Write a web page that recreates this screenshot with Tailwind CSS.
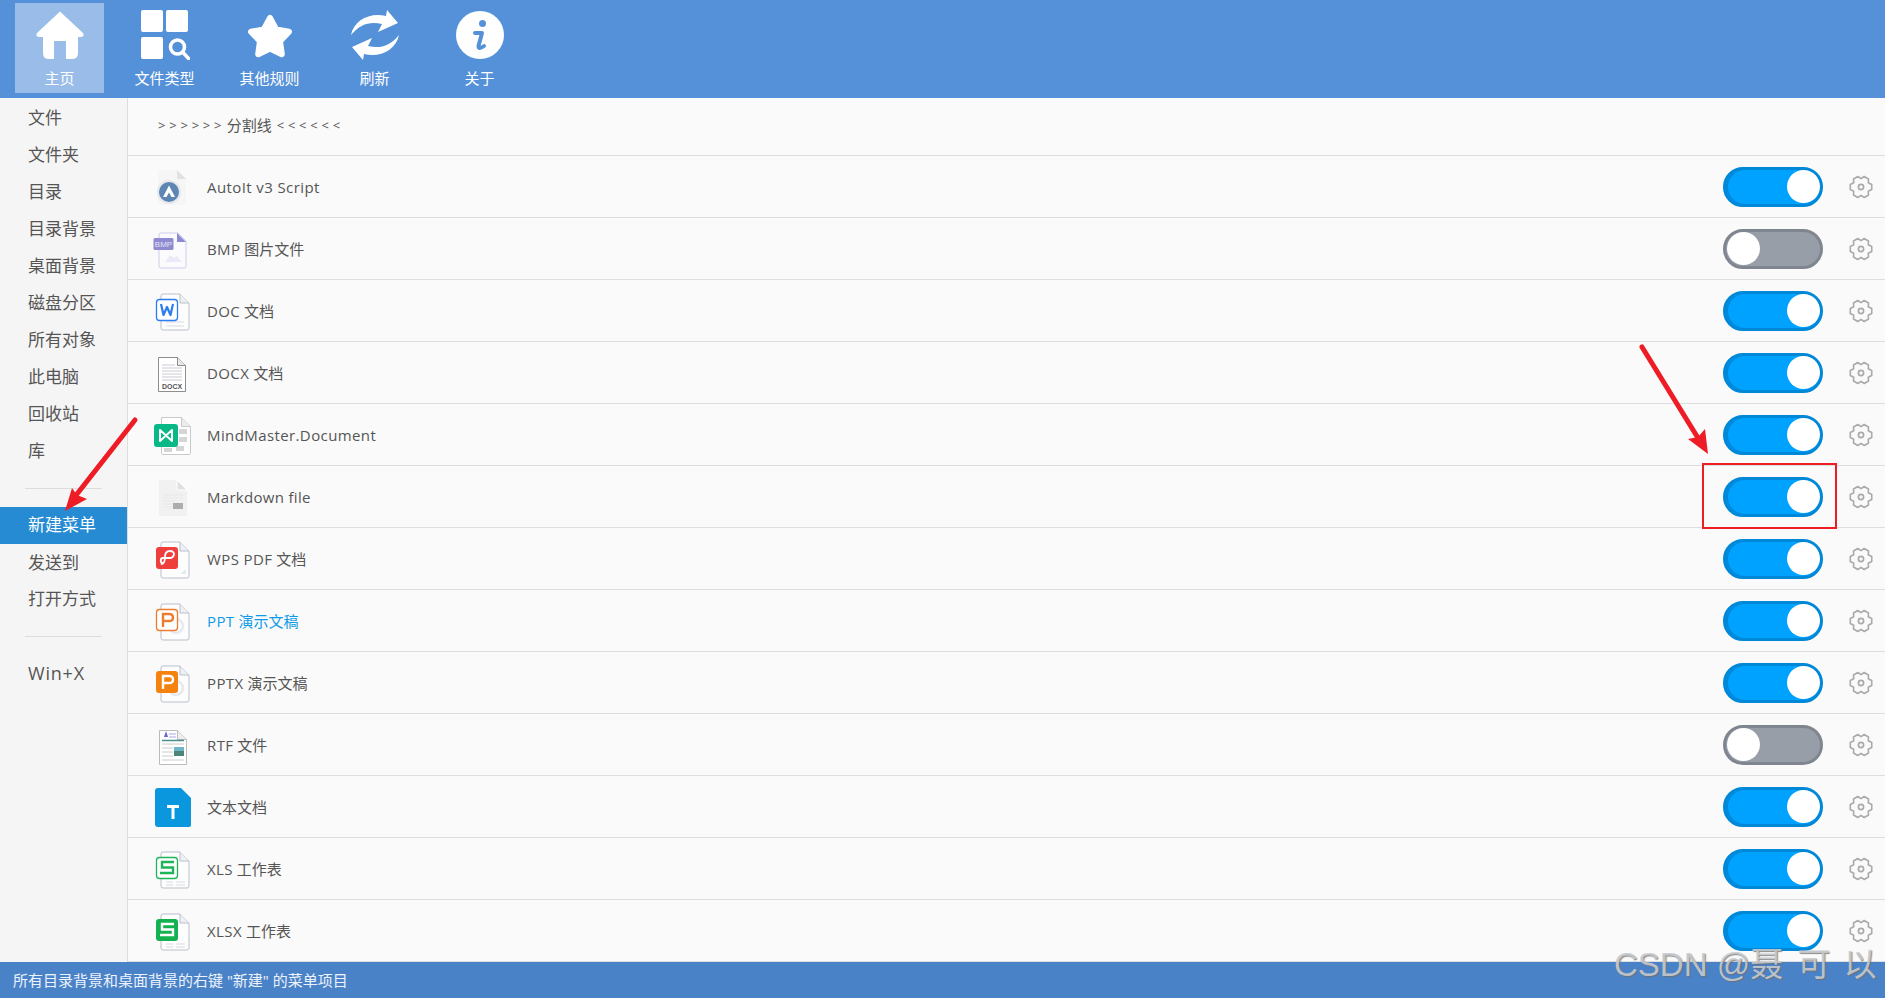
<!DOCTYPE html>
<html lang="zh-CN">

<head>
    <meta charset="UTF-8">
    <meta name="viewport" content="width=device-width, initial-scale=1.0">
    <script src="https://cdn.jsdelivr.net/npm/@tailwindcss/browser@4"></script>
    <title>ContextMenuManager</title>
</head>

<body class="relative w-[1885px] h-[998px] overflow-hidden flex flex-col bg-[#fafafa] text-[#555] font-['Open_Sans','Noto_Sans_CJK_SC',sans-serif]">
    <!-- shared icon parts -->
    <svg class="hidden">
        <symbol id="gear" viewBox="0 0 24 24">
            <path d="M12 3.600L15.220 1.480 19.500 3.960 19.270 7.800 22.720 9.530V14.470L19.270 16.200 19.500 20.040 15.220 22.520 12 20.400 8.780 22.520 4.500 20.040 4.730 16.200 1.280 14.470V9.530L4.730 7.800 4.500 3.960 8.780 1.480z" fill="none" stroke="#aaa" stroke-width="1.600" stroke-linejoin="round"/>
            <circle cx="12" cy="12" r="2.600" fill="none" stroke="#aaa" stroke-width="1.700"/>
        </symbol>
        <symbol id="wpsdoc" viewBox="0 0 40 40">
            <path d="M11 3h17l9 9v25q0 2-2 2H11q-2 0-2-2V5q0-2 2-2z" fill="#fdfdfe" stroke="#b9bfca" stroke-width="1"/>
            <path d="M28 3v9h9" fill="#eef0f4" stroke="#b9bfca" stroke-width="1"/>
        </symbol>
    </svg>

    <!-- toolbar -->
    <header class="h-[98px] shrink-0 bg-[#5591d9] pl-[15px] pt-[3px] flex gap-4 text-white text-[15px]">
        <div class="w-[89px] h-[90px] bg-white/40 flex flex-col items-center pt-[7px]">
            <svg class="w-[50px] h-[50px]" viewBox="0 0 50 50"><path d="M25 1.500L48 23q2 3-2 4h-3v16q0 6-6 6h-6V31H19v18h-5q-6 0-6-6V27H4q-4-1-2-4z" fill="#fff"/></svg>
            <span class="mt-[8px] leading-[20px]">主页</span>
        </div>
        <div class="w-[89px] h-[90px] flex flex-col items-center pt-[7px]">
            <svg class="w-[50px] h-[50px]" viewBox="0 0 50 50" fill="#fff">
                <rect x="1" y="0" width="22" height="22" rx="2"/>
                <rect x="26" y="0" width="22" height="22" rx="2"/>
                <rect x="1" y="27" width="22" height="22" rx="2"/>
                <circle cx="37.500" cy="37" r="7" fill="none" stroke="#fff" stroke-width="3.500"/>
                <path d="M43 42.500l6 6.500" stroke="#fff" stroke-width="3.500" stroke-linecap="round"/>
            </svg>
            <span class="mt-[8px] leading-[20px]">文件类型</span>
        </div>
        <div class="w-[89px] h-[90px] flex flex-col items-center pt-[7px]">
            <svg class="w-[50px] h-[50px]" viewBox="0 0 50 50"><path d="M25 8l6.200 11.500 12.800 2.300-9 9.400 1.800 13-11.800-5.700-11.800 5.700 1.800-13-9-9.400 12.800-2.300z" fill="#fff" stroke="#fff" stroke-width="6" stroke-linejoin="round"/></svg>
            <span class="mt-[8px] leading-[20px]">其他规则</span>
        </div>
        <div class="w-[89px] h-[90px] flex flex-col items-center pt-[7px]">
            <svg class="w-[50px] h-[50px]" viewBox="0 0 50 50" fill="#fff">
                <path d="M1 25C4 10 20 2 36 6l1-6 11 13-20 9 4-8C20 11 10 14 1 25z"/>
                <path d="M1 25C4 10 20 2 36 6l1-6 11 13-20 9 4-8C20 11 10 14 1 25z" transform="rotate(180 25 25)"/>
            </svg>
            <span class="mt-[8px] leading-[20px]">刷新</span>
        </div>
        <div class="w-[89px] h-[90px] flex flex-col items-center pt-[7px]">
            <svg class="w-[50px] h-[50px]" viewBox="0 0 50 50">
                <circle cx="25" cy="25" r="24" fill="#fff"/>
                <circle cx="27.500" cy="13.500" r="3.500" fill="#5591d9"/>
                <path d="M20 23h7l-3.500 13q0 4 5.500 0" fill="none" stroke="#5591d9" stroke-width="4" stroke-linecap="round" stroke-linejoin="round"/>
            </svg>
            <span class="mt-[8px] leading-[20px]">关于</span>
        </div>
    </header>

    <div class="flex-1 flex min-h-0">
        <!-- sidebar -->
        <nav class="w-[128px] shrink-0 bg-[#f5f5f5] border-r border-[#ddd] text-[17px] pt-px">
            <div class="h-[37px] pl-7 flex items-center">文件</div>
            <div class="h-[37px] pl-7 flex items-center">文件夹</div>
            <div class="h-[37px] pl-7 flex items-center">目录</div>
            <div class="h-[37px] pl-7 flex items-center">目录背景</div>
            <div class="h-[37px] pl-7 flex items-center">桌面背景</div>
            <div class="h-[37px] pl-7 flex items-center">磁盘分区</div>
            <div class="h-[37px] pl-7 flex items-center">所有对象</div>
            <div class="h-[37px] pl-7 flex items-center">此电脑</div>
            <div class="h-[37px] pl-7 flex items-center">回收站</div>
            <div class="h-[37px] pl-7 flex items-center">库</div>
            <div class="h-[38px] flex items-center px-[25px]"><div class="h-px w-[79px] bg-[#ddd]"></div></div>
            <div class="h-[37px] pl-7 pb-[2px] flex items-center bg-[#268bd2] text-white">新建菜单</div>
            <div class="h-[37px] pl-7 flex items-center">发送到</div>
            <div class="h-[37px] pl-7 pb-[2px] flex items-center">打开方式</div>
            <div class="h-[37px] flex items-center px-[25px]"><div class="h-px w-[79px] bg-[#ddd]"></div></div>
            <div class="h-[37px] pl-7 flex items-center text-[18px] tracking-[0.8px]">Win+X</div>
        </nav>

        <!-- rule list -->
        <main class="flex-1 min-w-0 text-[15px]">
            <div class="h-[58px] border-b border-[#dedede] pl-[30px] pb-[2px] flex items-center gap-[5px]">
                <span class="text-[13px] tracking-[0.2px]">&gt; &gt; &gt; &gt; &gt; &gt;</span>
                <span>分割线</span>
                <span class="text-[13px] tracking-[0.2px]">&lt; &lt; &lt; &lt; &lt; &lt;</span>
            </div>

            <div class="h-[62px] border-b border-[#dedede] pl-[24px] pr-[12px] flex items-center">
                <svg class="w-10 h-10 shrink-0 overflow-visible" viewBox="0 0 40 40">
                    <path d="M6 3h19l9 9v26H6z" fill="#f6f6f7"/><path d="M25 3v9h9z" fill="#dfe1e5"/>
                    <circle cx="17" cy="25" r="12" fill="#e6e8ec"/><circle cx="17" cy="25" r="10" fill="#5d86b2"/>
                    <path d="M11 30L17 18.500 23 30h-3.500L17 25.500 14.500 30z" fill="#fff"/>
                </svg>
                <span class="ml-[15px] pt-px flex-1 tracking-[0.4px]">AutoIt v3 Script</span>
                <div class="w-[100px] h-10 box-border rounded-full border-[3px] border-[#0088d8] bg-[#00a2ff] shadow-[inset_2px_0_0_#0088d8] flex items-center justify-end"><div class="w-[33px] h-[33px] rounded-full bg-white"></div></div>
                <svg class="ml-[26px] w-6 h-6"><use href="#gear"/></svg>
            </div>

            <div class="h-[62px] border-b border-[#dedede] pl-[24px] pr-[12px] flex items-center">
                <svg class="w-10 h-10 shrink-0 overflow-visible" viewBox="0 0 40 40">
                    <path d="M9 4h17l8 8v25q0 2-2 2H9q-2 0-2-2V6q0-2 2-2z" fill="#fbfbfe" stroke="#cfcdec" stroke-width="1"/>
                    <path d="M25 4v9h9z" fill="#8f8bd0"/>
                    <path d="M13 33l5-7 4 3 3-2 5 6z" fill="#ebeaf9"/>
                    <rect x="1.500" y="9" width="20" height="12" rx="1.500" fill="#8f8bd0"/>
                    <text x="11.500" y="18" text-anchor="middle" font-size="8" fill="#e4e3f7" font-family="Liberation Sans">BMP</text>
                </svg>
                <span class="ml-[15px] pt-px flex-1"><span class="tracking-[0.4px]">BMP</span> 图片文件</span>
                <div class="w-[100px] h-10 box-border rounded-full border-[3px] border-[#80868f] bg-[#979ea8] flex items-center pl-[1px]"><div class="w-[33px] h-[33px] rounded-full bg-white"></div></div>
                <svg class="ml-[26px] w-6 h-6"><use href="#gear"/></svg>
            </div>

            <div class="h-[62px] border-b border-[#dedede] pl-[24px] pr-[12px] flex items-center">
                <svg class="w-10 h-10 shrink-0 overflow-visible" viewBox="0 0 40 40">
                    <use href="#wpsdoc" width="40" height="40"/>
                    <path d="M14 31h18M14 35h18" stroke="#e3e6ec" stroke-width="1.500"/>
                    <rect x="4.500" y="8.500" width="21" height="21" rx="3" fill="#fff" stroke="#2b7df0" stroke-width="1.300"/>
                    <path d="M9 13l2.500 11 3.500-8 3.500 8L21 13" fill="none" stroke="#2b7df0" stroke-width="2.200" stroke-linejoin="round"/>
                </svg>
                <span class="ml-[15px] pt-px flex-1"><span class="tracking-[0.4px]">DOC</span> 文档</span>
                <div class="w-[100px] h-10 box-border rounded-full border-[3px] border-[#0088d8] bg-[#00a2ff] shadow-[inset_2px_0_0_#0088d8] flex items-center justify-end"><div class="w-[33px] h-[33px] rounded-full bg-white"></div></div>
                <svg class="ml-[26px] w-6 h-6"><use href="#gear"/></svg>
            </div>

            <div class="h-[62px] border-b border-[#dedede] pl-[24px] pr-[12px] flex items-center">
                <svg class="w-10 h-10 shrink-0 overflow-visible" viewBox="0 0 40 40">
                    <path d="M6.500 4.500h19l8 8v26h-27z" fill="#fff" stroke="#8d8d8d" stroke-width="1"/>
                    <path d="M25.500 4.500v8h8" fill="#e8e8e8" stroke="#8d8d8d" stroke-width="1"/>
                    <path d="M10 12h13M10 15h20M10 18h20M10 21h20M10 24h20M10 27h20" stroke="#c9c9d3" stroke-width="1"/>
                    <text x="20" y="36" text-anchor="middle" font-size="7" font-weight="700" fill="#555" font-family="Liberation Sans">DOCX</text>
                </svg>
                <span class="ml-[15px] pt-px flex-1"><span class="tracking-[0.4px]">DOCX</span> 文档</span>
                <div class="w-[100px] h-10 box-border rounded-full border-[3px] border-[#0088d8] bg-[#00a2ff] shadow-[inset_2px_0_0_#0088d8] flex items-center justify-end"><div class="w-[33px] h-[33px] rounded-full bg-white"></div></div>
                <svg class="ml-[26px] w-6 h-6"><use href="#gear"/></svg>
            </div>

            <div class="h-[62px] border-b border-[#dedede] pl-[24px] pr-[12px] flex items-center">
                <svg class="w-10 h-10 shrink-0 overflow-visible" viewBox="0 0 40 40">
                    <path d="M9.500 2.500h20l9 9v27q0 1-1 1h-27q-1 0-1-1z" fill="#fff" stroke="#c9c9c9" stroke-width="1"/>
                    <path d="M29.500 2.500v9h9" fill="#ececec" stroke="#c9c9c9" stroke-width="1"/>
                    <path d="M27 14h8v5h-8zM27 22h8v5h-8zM12 33h8v4h-8zM24 31h8v5h-8z" fill="#d5d5d5"/>
                    <rect x="2" y="9" width="24" height="23" rx="3" fill="#08b886"/>
                    <path d="M8 15l6 5.500 6-5.500v11l-6-5.500L8 26z" fill="none" stroke="#fff" stroke-width="2" stroke-linejoin="round"/>
                </svg>
                <span class="ml-[15px] pt-px flex-1 tracking-[0.4px]">MindMaster.Document</span>
                <div class="w-[100px] h-10 box-border rounded-full border-[3px] border-[#0088d8] bg-[#00a2ff] shadow-[inset_2px_0_0_#0088d8] flex items-center justify-end"><div class="w-[33px] h-[33px] rounded-full bg-white"></div></div>
                <svg class="ml-[26px] w-6 h-6"><use href="#gear"/></svg>
            </div>

            <div class="h-[62px] border-b border-[#dedede] pl-[24px] pr-[12px] flex items-center">
                <svg class="w-10 h-10 shrink-0 overflow-visible" viewBox="0 0 40 40">
                    <path d="M7 3h18l10 10v26H7z" fill="#f1f1f1"/><path d="M25 3v10h10z" fill="#e0e0e0" stroke="#fff" stroke-width="1"/>
                    <path d="M11 18h20M11 21h20M11 24h12M11 27h12M11 30h12" stroke="#e9e9e9" stroke-width="1"/>
                    <rect x="21" y="26" width="10" height="6" fill="#adadad"/>
                </svg>
                <span class="ml-[15px] pt-px flex-1 tracking-[0.3px]">Markdown file</span>
                <div class="w-[100px] h-10 box-border rounded-full border-[3px] border-[#0088d8] bg-[#00a2ff] shadow-[inset_2px_0_0_#0088d8] flex items-center justify-end"><div class="w-[33px] h-[33px] rounded-full bg-white"></div></div>
                <svg class="ml-[26px] w-6 h-6"><use href="#gear"/></svg>
            </div>

            <div class="h-[62px] border-b border-[#dedede] pl-[24px] pr-[12px] flex items-center">
                <svg class="w-10 h-10 shrink-0 overflow-visible" viewBox="0 0 40 40">
                    <use href="#wpsdoc" width="40" height="40"/>
                    <path d="M14 35h14l6-5v5z" fill="#e6e9ef"/>
                    <rect x="4" y="8" width="22" height="22" rx="3" fill="#ee3f3c"/>
                    <path d="M9 25c3 0 4-2 4-7 0-4 2-6 5-6s4 2 4 3-1 4-4 4h-7c-3 0-3 5 0 5z" fill="none" stroke="#fff" stroke-width="1.800"/>
                </svg>
                <span class="ml-[15px] pt-px flex-1"><span class="tracking-[0.4px]">WPS PDF</span> 文档</span>
                <div class="w-[100px] h-10 box-border rounded-full border-[3px] border-[#0088d8] bg-[#00a2ff] shadow-[inset_2px_0_0_#0088d8] flex items-center justify-end"><div class="w-[33px] h-[33px] rounded-full bg-white"></div></div>
                <svg class="ml-[26px] w-6 h-6"><use href="#gear"/></svg>
            </div>

            <div class="h-[62px] border-b border-[#dedede] pl-[24px] pr-[12px] flex items-center">
                <svg class="w-10 h-10 shrink-0 overflow-visible" viewBox="0 0 40 40">
                    <use href="#wpsdoc" width="40" height="40"/>
                    <circle cx="24" cy="25" r="7" fill="none" stroke="#e7e9ee" stroke-width="2.500"/>
                    <rect x="4.500" y="8.500" width="21" height="21" rx="3" fill="#fff" stroke="#ee7c30" stroke-width="1.300"/>
                    <path d="M11 26V13h6q4 0 4 3.500T17 20h-6" fill="none" stroke="#ee7c30" stroke-width="2.400"/>
                </svg>
                <span class="ml-[15px] pt-px flex-1 text-[#0f9ae8]"><span class="tracking-[0.4px]">PPT</span> 演示文稿</span>
                <div class="w-[100px] h-10 box-border rounded-full border-[3px] border-[#0088d8] bg-[#00a2ff] shadow-[inset_2px_0_0_#0088d8] flex items-center justify-end"><div class="w-[33px] h-[33px] rounded-full bg-white"></div></div>
                <svg class="ml-[26px] w-6 h-6"><use href="#gear"/></svg>
            </div>

            <div class="h-[62px] border-b border-[#dedede] pl-[24px] pr-[12px] flex items-center">
                <svg class="w-10 h-10 shrink-0 overflow-visible" viewBox="0 0 40 40">
                    <use href="#wpsdoc" width="40" height="40"/>
                    <circle cx="24" cy="25" r="7" fill="none" stroke="#e7e9ee" stroke-width="2.500"/>
                    <rect x="4" y="8" width="22" height="22" rx="3" fill="#f5820f"/>
                    <path d="M11 26V13h6q4 0 4 3.500T17 20h-6" fill="none" stroke="#fff" stroke-width="2.400"/>
                </svg>
                <span class="ml-[15px] pt-px flex-1"><span class="tracking-[0.4px]">PPTX</span> 演示文稿</span>
                <div class="w-[100px] h-10 box-border rounded-full border-[3px] border-[#0088d8] bg-[#00a2ff] shadow-[inset_2px_0_0_#0088d8] flex items-center justify-end"><div class="w-[33px] h-[33px] rounded-full bg-white"></div></div>
                <svg class="ml-[26px] w-6 h-6"><use href="#gear"/></svg>
            </div>

            <div class="h-[62px] border-b border-[#dedede] pl-[24px] pr-[12px] flex items-center">
                <svg class="w-10 h-10 shrink-0 overflow-visible" viewBox="0 0 40 40">
                    <path d="M7.500 5.500h18l9 9v25h-27z" fill="#fff" stroke="#bbb" stroke-width="1"/>
                    <path d="M25.500 5.500v9h9" fill="#eee" stroke="#bbb" stroke-width="1"/>
                    <path d="M12 12l2-6 2 6z" fill="#6a60d8"/><path d="M17 9h7M17 12h7" stroke="#a9a6e6" stroke-width="1"/>
                    <path d="M10 15.500h22" stroke="#4a8f8c" stroke-width="1.500"/>
                    <path d="M10 19h22M10 23h11M10 27h11M10 31h11M10 35h22" stroke="#ccc" stroke-width="1"/>
                    <rect x="22" y="22" width="10" height="4" fill="#6fb5c7"/><rect x="22" y="26" width="10" height="5" fill="#4d8578"/>
                </svg>
                <span class="ml-[15px] pt-px flex-1"><span class="tracking-[0.4px]">RTF</span> 文件</span>
                <div class="w-[100px] h-10 box-border rounded-full border-[3px] border-[#80868f] bg-[#979ea8] flex items-center pl-[1px]"><div class="w-[33px] h-[33px] rounded-full bg-white"></div></div>
                <svg class="ml-[26px] w-6 h-6"><use href="#gear"/></svg>
            </div>

            <div class="h-[62px] border-b border-[#dedede] pl-[24px] pr-[12px] flex items-center">
                <svg class="w-10 h-10 shrink-0 overflow-visible" viewBox="0 0 40 40">
                    <path d="M6 1h23l10 10v27q0 2-2 2H6q-3 0-3-3V4q0-3 3-3z" fill="#0b97de"/>
                    <path d="M15 18h12v3h-4.500v11h-3V21H15z" fill="#fff"/>
                </svg>
                <span class="ml-[15px] pt-px flex-1">文本文档</span>
                <div class="w-[100px] h-10 box-border rounded-full border-[3px] border-[#0088d8] bg-[#00a2ff] shadow-[inset_2px_0_0_#0088d8] flex items-center justify-end"><div class="w-[33px] h-[33px] rounded-full bg-white"></div></div>
                <svg class="ml-[26px] w-6 h-6"><use href="#gear"/></svg>
            </div>

            <div class="h-[62px] border-b border-[#dedede] pl-[24px] pr-[12px] flex items-center">
                <svg class="w-10 h-10 shrink-0 overflow-visible" viewBox="0 0 40 40">
                    <use href="#wpsdoc" width="40" height="40"/>
                    <path d="M14 33h7M24 33h9M14 36h7M24 36h9" stroke="#e3e6ec" stroke-width="1.500"/>
                    <rect x="4.500" y="8.500" width="21" height="21" rx="3" fill="#fff" stroke="#1fb45a" stroke-width="1.300"/>
                    <path d="M22 13H10v5.500h11V24H8" fill="none" stroke="#1fb45a" stroke-width="2.400"/>
                </svg>
                <span class="ml-[15px] pt-px flex-1"><span class="tracking-[0.4px]">XLS</span> 工作表</span>
                <div class="w-[100px] h-10 box-border rounded-full border-[3px] border-[#0088d8] bg-[#00a2ff] shadow-[inset_2px_0_0_#0088d8] flex items-center justify-end"><div class="w-[33px] h-[33px] rounded-full bg-white"></div></div>
                <svg class="ml-[26px] w-6 h-6"><use href="#gear"/></svg>
            </div>

            <div class="h-[62px] border-b border-[#dedede] pl-[24px] pr-[12px] flex items-center">
                <svg class="w-10 h-10 shrink-0 overflow-visible" viewBox="0 0 40 40">
                    <use href="#wpsdoc" width="40" height="40"/>
                    <path d="M14 33h7M24 33h9M14 36h7M24 36h9" stroke="#e3e6ec" stroke-width="1.500"/>
                    <rect x="4" y="8" width="22" height="22" rx="3" fill="#14b151"/>
                    <path d="M22 13H10v5.500h11V24H8" fill="none" stroke="#fff" stroke-width="2.400"/>
                </svg>
                <span class="ml-[15px] pt-px flex-1"><span class="tracking-[0.4px]">XLSX</span> 工作表</span>
                <div class="w-[100px] h-10 box-border rounded-full border-[3px] border-[#0088d8] bg-[#00a2ff] shadow-[inset_2px_0_0_#0088d8] flex items-center justify-end"><div class="w-[33px] h-[33px] rounded-full bg-white"></div></div>
                <svg class="ml-[26px] w-6 h-6"><use href="#gear"/></svg>
            </div>
        </main>
    </div>

    <!-- status bar -->
    <footer class="h-9 shrink-0 bg-[#4a82c8] text-white/90 text-[15px] pl-[13px] flex items-center">所有目录背景和桌面背景的右键 "新建" 的菜单项目</footer>

    <!-- annotations on top of the screenshot -->
    <svg class="absolute inset-0 pointer-events-none" width="1885" height="998" viewBox="0 0 1885 998">
        <rect x="1703" y="464" width="133" height="64" fill="none" stroke="#ee1c25" stroke-width="2"/>
        <path d="M1642 347L1698 438" stroke="#ee1c25" stroke-width="5" stroke-linecap="round"/>
        <path d="M1708 454L1688 439 1698 437 1705 429z" fill="#ee1c25"/>
        <path d="M135 420L77 494" stroke="#ee1c25" stroke-width="5" stroke-linecap="round"/>
        <path d="M65 511L72 488 77 495 87 499z" fill="#ee1c25"/>
    </svg>
    <div class="absolute left-[1614px] top-[941px] whitespace-nowrap text-[33px] leading-[48px] text-[#c9ccd0]/90 font-['Liberation_Sans','Noto_Sans_CJK_SC',sans-serif] [text-shadow:1px_1px_1px_rgba(110,110,110,0.8)]">CSDN @聂<span class="ml-[5px]"> 可</span><span class="ml-[4px]"> 以</span></div>
</body>

</html>
